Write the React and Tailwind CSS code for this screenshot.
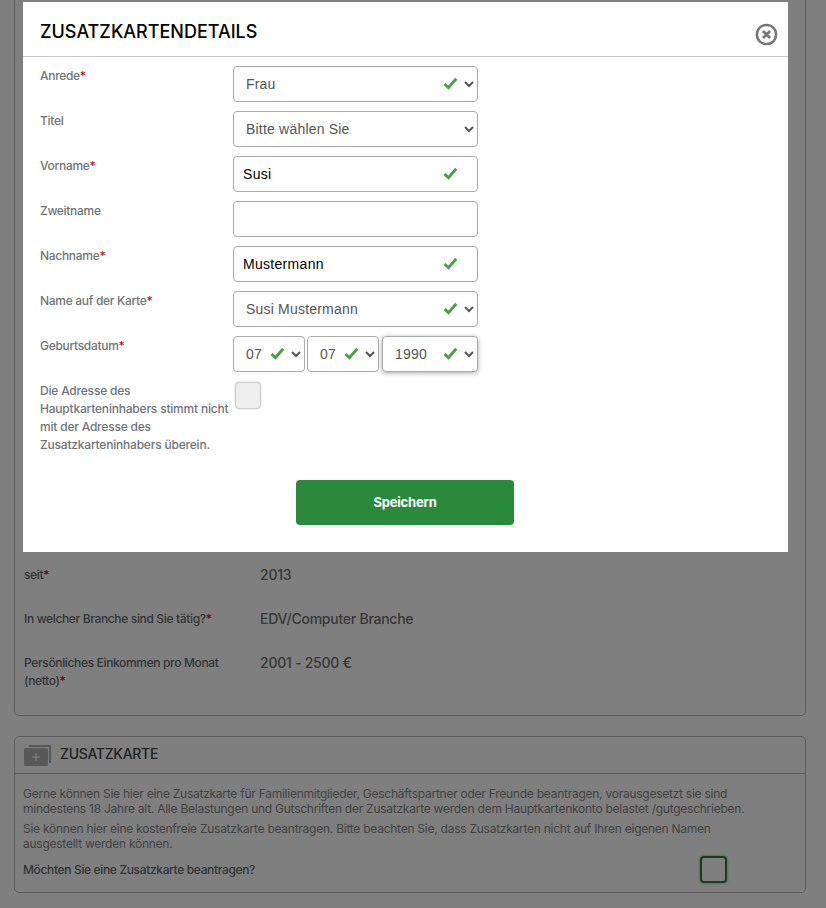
import React from "react";

const Check = ({ className }) => (
  <svg viewBox="0 0 16 14" className={`absolute pointer-events-none w-[15px] h-[13px] ${className}`} fill="none">
    <path d="M1.5 7.5 L5.8 11.5 L14.2 2" stroke="#4a9f4d" strokeWidth="3.2" />
  </svg>
);

const Req = () => <span className="text-[#c8102e]">*</span>;

const selectClass =
  "w-full h-9 rounded-[4px] border border-[#aaaaaa] bg-white pl-2 text-sm tracking-[0.2px] text-[#555555] font-['Liberation_Sans',sans-serif] outline-none";
const inputClass =
  "w-full h-9 rounded-[4px] border border-[#aaaaaa] bg-white px-[9px] text-sm tracking-[0.3px] text-black font-['Liberation_Sans',sans-serif] outline-none";

function Row({ label, required, children }) {
  return (
    <div className="grid grid-cols-[193px_245px]">
      <label className="pt-[1px] text-[12px] tracking-[-0.3px] leading-[18px] text-[#6f7478] font-medium">
        {label}
        {required && <Req />}
      </label>
      {children}
    </div>
  );
}

function CheckedSelect({ value, extra = "" }) {
  return (
    <div className="relative">
      <select className={`${selectClass} ${extra}`} defaultValue={value}>
        <option>{value}</option>
      </select>
      <Check className="right-[20px] top-[11px]" />
    </div>
  );
}

function Modal() {
  return (
    <div className="absolute left-[23px] top-[2px] w-[765px] h-[550px] bg-white">
      <div className="h-[55px] flex items-center justify-between pl-[17px] pr-[10px] border-b border-[#cccccc]">
        <h2 className="mt-[6px] text-lg font-medium text-black">ZUSATZKARTENDETAILS</h2>
        <svg viewBox="0 0 24 24" className="w-[23px] h-[23px] mt-[10px]" fill="none" stroke="#777777">
          <circle cx="12" cy="12" r="10" strokeWidth="2.6" />
          <path d="M8.3 8.3 L15.7 15.7 M15.7 8.3 L8.3 15.7" strokeWidth="3" />
        </svg>
      </div>

      <div className="flex flex-col gap-[9px] pl-[17px] pt-[9px]">
        <Row label="Anrede" required>
          <CheckedSelect value="Frau" />
        </Row>
        <Row label="Titel">
          <select className={selectClass} defaultValue="Bitte wählen Sie">
            <option>Bitte wählen Sie</option>
          </select>
        </Row>
        <Row label="Vorname" required>
          <div className="relative">
            <input className={inputClass} defaultValue="Susi" />
            <Check className="right-[20px] top-[11px]" />
          </div>
        </Row>
        <Row label="Zweitname">
          <input className={inputClass} />
        </Row>
        <Row label="Nachname" required>
          <div className="relative">
            <input className={inputClass} defaultValue="Mustermann" />
            <Check className="right-[20px] top-[11px]" />
          </div>
        </Row>
        <Row label="Name auf der Karte" required>
          <CheckedSelect value="Susi Mustermann" />
        </Row>
        <Row label="Geburtsdatum" required>
          <div className="grid grid-cols-[72px_72px_96px] gap-x-[2px] w-[245px]">
            <CheckedSelect value="07" />
            <CheckedSelect value="07" />
            <div className="ml-[1px] w-[96px]">
              <CheckedSelect value="1990" extra="shadow-[0_1px_5px_rgba(0,0,0,0.35)]" />
            </div>
          </div>
        </Row>
        <div className="grid grid-cols-[193px_245px]">
          <p className="pt-[1px] text-[12px] tracking-[-0.2px] leading-[18px] text-[#6f7478] font-medium">
            Die Adresse des
            <br />
            Hauptkarteninhabers stimmt nicht mit der Adresse des Zusatzkarteninhabers überein.
          </p>
          <input
            type="checkbox"
            className="appearance-none w-[26px] h-[27px] ml-[2px] mt-[1px] rounded-[4px] bg-[#eeeeee] border border-[#cccccc] shadow-[0_0_2px_rgba(0,0,0,0.2)]"
          />
        </div>
      </div>

      <div className="flex justify-center pt-[26px] pr-[1px]">
        <button className="w-[218px] h-[45px] rounded-[4px] bg-[#2a8a3b] text-white text-[13px] tracking-[-0.2px] font-bold">
          Speichern
        </button>
      </div>
    </div>
  );
}

function InfoRow({ label, value }) {
  return (
    <div className="grid grid-cols-[236px_1fr] mb-[26px]">
      <div className="text-[12px] tracking-[-0.35px] leading-[18px] font-medium text-[#666a6e]">
        {label}
        <Req />
      </div>
      <div className="text-sm tracking-[-0.25px] leading-[18px] font-medium text-[#6e6e6e]">{value}</div>
    </div>
  );
}

export default function App() {
  return (
    <div className="relative h-[908px] w-[826px] overflow-hidden bg-white font-['Inter',sans-serif]">
      <div className="pl-[14px] pr-[20px]">
        <div className="h-[716px] rounded-b-[5px] border border-t-0 border-[#bbbbbb] pl-[9px] pt-[566px]">
          <InfoRow label="seit" value="2013" />
          <InfoRow label="In welcher Branche sind Sie tätig?" value="EDV/Computer Branche" />
          <InfoRow
            label={
              <>
                Persönliches Einkommen pro Monat
                <br />
                (netto)
              </>
            }
            value="2001 - 2500 €"
          />
        </div>

        <div className="mt-[20px] h-[157px] rounded-[5px] border border-[#bbbbbb]">
          <div className="h-[37px] flex items-center gap-[8px] pl-[9px] border-b border-[#bbbbbb]">
            <svg viewBox="0 0 28 21" className="w-7 h-[21px]">
              <path d="M5 0 H27 V18 H25 V2 H5 Z" fill="#b0b0b0" />
              <rect x="0" y="3" width="24" height="18" rx="1.5" fill="#b0b0b0" />
              <path d="M12 8 V16 M8 12 H16" stroke="#eeeeee" strokeWidth="1.6" />
            </svg>
            <span className="mb-[2px] text-sm tracking-[-0.3px] font-medium text-[#444444]">ZUSATZKARTE</span>
          </div>
          <div className="pl-2 pr-[50px] pt-[12px] text-[12px] tracking-[-0.25px] leading-[15px] text-[#858585]">
            <p>
              Gerne können Sie hier eine Zusatzkarte für Familienmitglieder, Geschäftspartner oder Freunde beantragen, vorausgesetzt sie sind mindestens 18 Jahre alt. Alle Belastungen und Gutschriften der Zusatzkarte werden dem Hauptkartenkonto belastet /gutgeschrieben.
            </p>
            <p className="mt-[5px]">
              Sie können hier eine kostenfreie Zusatzkarte beantragen. Bitte beachten Sie, dass Zusatzkarten nicht auf Ihren eigenen Namen ausgestellt werden können.
            </p>
            <div className="flex items-center mt-[5px] h-[27px]">
              <span className="w-[677px] font-medium tracking-[-0.35px] text-[#666a6e]">Möchten Sie eine Zusatzkarte beantragen?</span>
              <input
                type="checkbox"
                className="appearance-none w-[27px] h-[27px] rounded-[4px] bg-white border-2 border-[#2c7a45] shadow-[0_0_3px_rgba(40,140,70,0.6)]"
              />
            </div>
          </div>
        </div>
      </div>

      {/* modal overlay */}
      <div className="absolute inset-0 bg-black/50" />
      <Modal />
    </div>
  );
}
